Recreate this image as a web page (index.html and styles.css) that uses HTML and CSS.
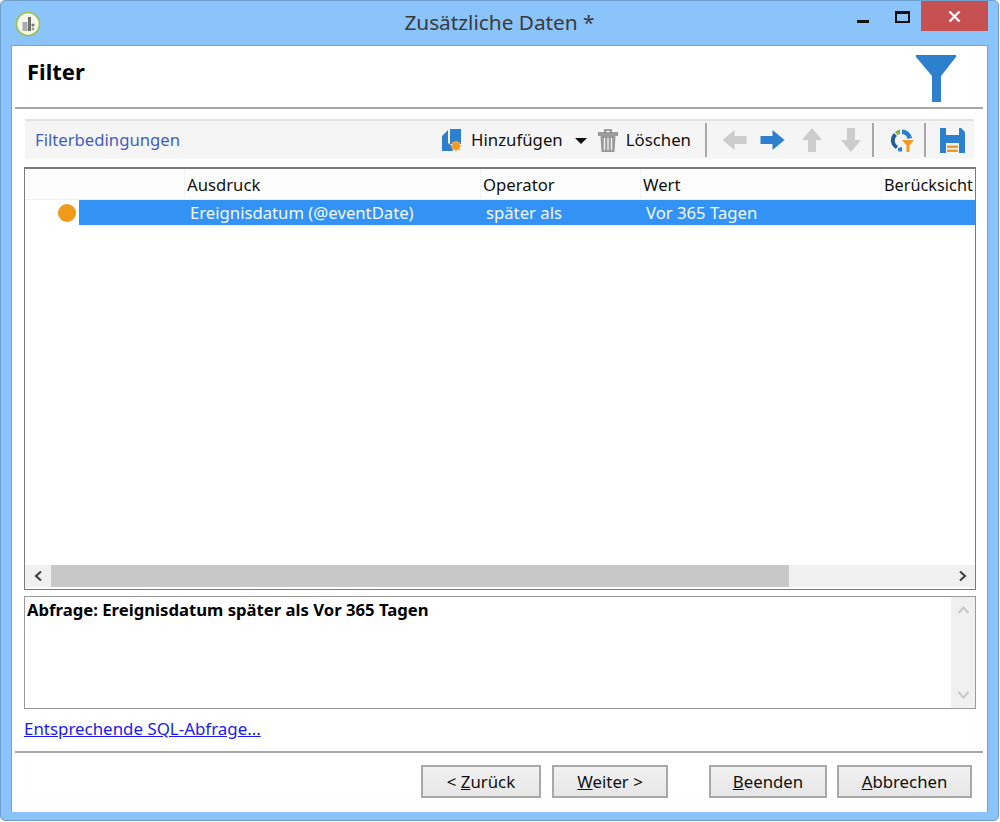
FILE: index.html
```html
<!DOCTYPE html>
<html lang="de">
<head>
    <meta charset="UTF-8">
    <title>Zusätzliche Daten</title>
    <link rel="stylesheet" href="styles.css">
</head>
<body>
    <div class="window">
        <div class="titlebar">
            <div class="title-left">
                <svg class="app-icon" width="26" height="26" viewBox="0 0 26 26">
                    <circle cx="13" cy="13" r="11.5" fill="#f4f6ee" stroke="#9cc04c" stroke-width="1.6"/>
                    <rect x="7.5" y="11" width="5" height="9" fill="#a9aca8"/>
                    <rect x="13" y="6" width="3" height="14" fill="#6d716d"/>
                    <circle cx="18" cy="14" r="1.6" fill="#777"/>
                    <circle cx="18" cy="18" r="1.4" fill="#999"/>
                </svg>
            </div>
            <div class="title-text">Zusätzliche Daten *</div>
            <div class="window-buttons">
                <div class="win-btn btn-min"><span class="min-glyph"></span></div>
                <div class="win-btn"><span class="max-glyph"></span></div>
                <div class="close-btn">
                    <svg width="13" height="13" viewBox="0 0 13 13"><path d="M1.5 1.5L11.5 11.5M11.5 1.5L1.5 11.5" stroke="#fff" stroke-width="2.4"/></svg>
                </div>
            </div>
        </div>

        <div class="content">
            <div class="header">
                <h1 class="heading">Filter</h1>
                <svg class="funnel" width="42" height="47" viewBox="0 0 42 47">
                    <path d="M1.5 0H40.500Q42 0 41 2L26 21V47H17V21L1 2Q0 0 1.500 0Z" fill="#2c80cd"/>
                </svg>
            </div>
            <div class="rule"></div>

            <div class="toolbar">
                <div class="toolbar-title">Filterbedingungen</div>
                <div class="tools">
                    <svg class="tool-icon" width="21" height="24" viewBox="0 0 21 24">
                        <path d="M1 8L7 2V15L12 18V23H1Z" fill="#2c80cd"/>
                        <path d="M9 1H20V16H9Z" fill="#2c80cd"/>
                        <circle cx="15" cy="18" r="4.200" fill="#f29a1f" stroke="#f5f5f5" stroke-width="0.600"/>
                        <path d="M15 12.500V23.500M9.500 18H20.500M11 14L19 22M19 14L11 22" stroke="#f29a1f" stroke-width="1.200"/>
                    </svg>
                    <span class="tool-label add-label">Hinzufügen</span>
                    <span class="caret"></span>
                    <svg class="tool-icon" width="20" height="25" viewBox="0 0 20 25">
                        <path d="M0 5H20V7H0ZM7 5V2H13V5" fill="none" stroke="#808080" stroke-width="1.600"/>
                        <path d="M2.500 8H17.500L16.500 24H3.500Z" fill="#9a9a9a"/>
                        <path d="M6.500 10V22M10 10V22M13.500 10V22" stroke="#f2f2f2" stroke-width="1.400"/>
                    </svg>
                    <span class="tool-label">Löschen</span>
                    <span class="tool-sep first-sep"></span>
                    <svg class="arrow arrow-back" width="25" height="24" viewBox="0 0 24 24"><path d="M12 2V8H24V16H12V22L0 12Z" fill="#cccccc"/></svg>
                    <svg class="arrow arrow-next" width="25" height="24" viewBox="0 0 24 24"><path d="M12 2V8H0V16H12V22L24 12Z" fill="#2c80cd"/></svg>
                    <svg class="arrow arrow-up" width="22" height="24" viewBox="0 0 22 24"><path d="M1 12L11 0L21 12H15V24H7V12Z" fill="#cccccc"/></svg>
                    <svg class="arrow arrow-down" width="22" height="24" viewBox="0 0 22 24"><path d="M1 12L11 24L21 12H15V0H7V12Z" fill="#cccccc"/></svg>
                    <span class="tool-sep second-sep"></span>
                    <svg class="tool-icon" width="25" height="25" viewBox="0 0 25 25">
                        <path d="M7 21A10 10 0 0 1 5 5L8 8A6 6 0 0 0 9 18Z" fill="#1d5f9e"/>
                        <path d="M6 4A10 10 0 0 1 11 1.500V6A6 6 0 0 0 8.500 7Z" fill="#7cb342"/>
                        <path d="M13 1.500A10 10 0 0 1 23 10L18.500 11A6 6 0 0 0 13 6Z" fill="#2c80cd"/>
                        <path d="M9 20L13 19V23.500A10 10 0 0 1 9 23Z" fill="#2c80cd"/>
                        <path d="M13 12H25L20.500 17.500V24H17.500V17.500Z" fill="#f29a1f"/>
                    </svg>
                    <span class="tool-sep third-sep"></span>
                    <svg class="tool-icon" width="25" height="25" viewBox="0 0 25 25">
                        <path d="M0 0H6V7H19V0H21L25 4V25H0Z" fill="#2c80cd"/>
                        <rect x="6" y="15" width="13" height="10" fill="#f5f5f5"/>
                        <rect x="7" y="17.500" width="11" height="2.500" fill="#f29a1f"/>
                        <rect x="7" y="21.500" width="11" height="2.500" fill="#f29a1f"/>
                    </svg>
                </div>
            </div>

            <div class="grid">
                <div class="grid-head">
                    <div class="col col-state"></div>
                    <div class="col col-expr">Ausdruck</div>
                    <div class="col col-op">Operator</div>
                    <div class="col col-val">Wert</div>
                    <div class="col col-extra">Berücksicht</div>
                </div>
                <div class="grid-row">
                    <div class="row-state"><span class="dot"></span></div>
                    <div class="row-cells">
                        <div class="cell cell-expr">Ereignisdatum (@eventDate)</div>
                        <div class="cell cell-op">später als</div>
                        <div class="cell cell-val">Vor 365 Tagen</div>
                    </div>
                </div>
                <div class="grid-empty"></div>
                <div class="hscroll">
                    <div class="scroll-btn">
                        <svg width="11" height="12" viewBox="0 0 11 12"><path d="M8 1.500L3 6L8 10.500" fill="none" stroke="#444" stroke-width="2.200"/></svg>
                    </div>
                    <div class="hthumb"></div>
                    <div class="htrack"></div>
                    <div class="scroll-btn">
                        <svg width="11" height="12" viewBox="0 0 11 12"><path d="M3 1.500L8 6L3 10.500" fill="none" stroke="#444" stroke-width="2.200"/></svg>
                    </div>
                </div>
            </div>

            <div class="query">
                <div class="query-text">Abfrage: Ereignisdatum später als Vor 365 Tagen</div>
                <div class="vscroll">
                    <svg width="13" height="10" viewBox="0 0 13 10"><path d="M1.500 8L6.500 2.500L11.500 8" fill="none" stroke="#c8c8c8" stroke-width="2"/></svg>
                    <svg width="13" height="10" viewBox="0 0 13 10"><path d="M1.500 2L6.500 7.500L11.500 2" fill="none" stroke="#c8c8c8" stroke-width="2"/></svg>
                </div>
            </div>

            <a class="sql-link" href="#">Entsprechende SQL-Abfrage...</a>
            <div class="rule bottom-rule"></div>

            <div class="footer">
                <button class="btn btn-back">&lt; <u>Z</u>urück</button>
                <button class="btn btn-next"><u>W</u>eiter &gt;</button>
                <button class="btn btn-finish"><u>B</u>eenden</button>
                <button class="btn btn-cancel"><u>A</u>bbrechen</button>
            </div>
        </div>
    </div>
</body>
</html>
```

FILE: styles.css
```css
html, body {
    margin: 0;
    padding: 0;
    background-color: #fff;
}

body {
    font-family: "Noto Sans", "Open Sans", sans-serif;
    font-size: 16.7px;
    color: #111;
}

.window {
    box-sizing: border-box;
    width: 999px;
    height: 821px;
    background-color: #8ac4fa;
    border: 1px solid #6e9fce;
    border-radius: 5px;
    padding: 0 10px 8px 10px;
    display: flex;
    flex-direction: column;
}

.titlebar {
    height: 44px;
    flex-shrink: 0;
    display: grid;
    grid-template-columns: 1fr auto 1fr;
}

.title-left {
    padding: 10px 0 0 4px;
}

.app-icon {
    display: block;
}

.title-text {
    font-size: 20.8px;
    color: #3a3a3a;
    padding-top: 7px;
}

.window-buttons {
    display: flex;
    justify-content: flex-end;
    align-items: flex-start;
}

.win-btn {
    width: 32px;
    height: 30px;
    display: flex;
    justify-content: center;
}

.btn-min {
    margin-right: 7px;
}

.min-glyph {
    width: 12px;
    height: 3px;
    background-color: #111;
    margin-top: 19px;
}

.max-glyph {
    box-sizing: border-box;
    width: 15px;
    height: 12px;
    border: 2px solid #111;
    border-top-width: 3px;
    margin-top: 10px;
}

.close-btn {
    width: 67px;
    height: 30px;
    background-color: #c75050;
    display: flex;
    align-items: center;
    justify-content: center;
    margin-left: 3px;
}

.content {
    flex: 1;
    min-height: 0;
    background-color: #fff;
    border: 1px solid #6fa5d8;
    border-bottom: none;
    padding: 0 4px 0 3px;
    display: flex;
    flex-direction: column;
}

.header {
    height: 61px;
    display: flex;
    justify-content: space-between;
    align-items: flex-start;
    padding-right: 26px;
    box-sizing: border-box;
}

.heading {
    margin: 10px 0 0 12px;
    font-size: 22px;
    line-height: 30px;
    font-weight: 700;
    color: #000;
}

.funnel {
    margin-top: 9px;
}

.rule {
    height: 2px;
    background-color: #a6a6a6;
    flex-shrink: 0;
}

.toolbar {
    box-sizing: border-box;
    height: 40px;
    margin: 10px 9px 8px 10px;
    background-color: #f5f5f5;
    border-top: 2px solid #e2e2e2;
    display: flex;
    align-items: center;
    justify-content: space-between;
    padding: 0 9px 0 10px;
    flex-shrink: 0;
}

.toolbar-title {
    color: #3f5fc0;
    padding-bottom: 2px;
}

.tools {
    display: flex;
    align-items: center;
}

.tool-label {
    font-size: 16.8px;
    margin-left: 8px;
    padding-bottom: 2px;
}

.add-label {
    margin-left: 9px;
}

.caret {
    width: 0;
    height: 0;
    border-left: 6px solid transparent;
    border-right: 6px solid transparent;
    border-top: 6px solid #111;
    margin: 2px 11px 0 12px;
}

.tool-sep {
    width: 2px;
    height: 34px;
    background-color: #a8a8a8;
}

.first-sep {
    margin: 0 15px 0 14px;
}

.second-sep {
    margin: 0 15px 0 10px;
}

.third-sep {
    margin: 0 14px 0 10px;
}

.arrow {
    flex-shrink: 0;
}

.arrow-back {
    margin-right: 13px;
}

.arrow-next {
    margin-right: 16px;
}

.arrow-up {
    margin-right: 17px;
}

.grid {
    height: 423px;
    box-sizing: border-box;
    margin: 0 7px 0 9px;
    border: 1px solid #7a7a7a;
    border-top-width: 2px;
    display: flex;
    flex-direction: column;
    flex-shrink: 0;
    overflow: hidden;
}

.grid-head {
    display: flex;
    height: 31px;
    background-color: #fdfdfd;
    border-bottom: 1px solid #f0f0f0;
    box-sizing: border-box;
    flex-shrink: 0;
    overflow: hidden;
    white-space: nowrap;
    line-height: 32px;
}

.col {
    box-sizing: border-box;
    padding-left: 2px;
    border-left: 1px solid #eef3f8;
    flex-shrink: 0;
}

.col-state {
    width: 159px;
    border-left: none;
}

.col-expr {
    width: 296px;
}

.col-op {
    width: 160px;
}

.col-val {
    width: 241px;
}

.col-extra {
    width: 92px;
    font-size: 16.3px;
}

.grid-row {
    display: flex;
    height: 25px;
    flex-shrink: 0;
}

.row-state {
    width: 54px;
    box-sizing: border-box;
    display: flex;
    align-items: center;
    justify-content: flex-end;
    padding-right: 3px;
    flex-shrink: 0;
}

.dot {
    width: 18px;
    height: 18px;
    border-radius: 50%;
    background-color: #f09a1c;
}

.row-cells {
    flex: 1;
    display: flex;
    background-color: #3393f5;
    color: #f2f8ff;
    line-height: 26px;
    white-space: nowrap;
}

.cell {
    box-sizing: border-box;
    flex-shrink: 0;
}

.cell-expr {
    width: 407px;
    padding-left: 111px;
}

.cell-op {
    width: 160px;
}

.cell-val {
    width: 200px;
}

.grid-empty {
    flex: 1;
}

.hscroll {
    height: 22px;
    margin-bottom: 2px;
    display: flex;
    background-color: #f0f0f0;
    flex-shrink: 0;
}

.scroll-btn {
    width: 26px;
    display: flex;
    align-items: center;
    justify-content: center;
    flex-shrink: 0;
}

.hthumb {
    width: 738px;
    background-color: #c8c8c8;
}

.htrack {
    flex: 1;
}

.query {
    box-sizing: border-box;
    height: 113px;
    margin: 6px 7px 0 9px;
    border: 1px solid #9a9a9a;
    display: flex;
    justify-content: space-between;
    flex-shrink: 0;
}

.query-text {
    font-weight: 700;
    color: #000;
    padding: 1px 0 0 2px;
}

.vscroll {
    width: 24px;
    background-color: #f0f0f0;
    display: flex;
    flex-direction: column;
    justify-content: space-between;
    align-items: center;
    padding: 8px 0;
    box-sizing: border-box;
}

.sql-link {
    color: #1a1aee;
    font-size: 16.9px;
    margin: 8px 0 0 9px;
    line-height: 24px;
    align-self: flex-start;
}

.bottom-rule {
    margin-top: 10px;
}

.footer {
    display: flex;
    padding: 12px 0 0 406px;
}

.btn {
    box-sizing: border-box;
    height: 33px;
    font-family: inherit;
    font-size: 16.8px;
    color: #111;
    background: linear-gradient(#f2f2f2, #e6e6e6);
    border: 2px solid #a8a8a8;
    padding: 0;
}

.btn-back {
    width: 120px;
    margin-right: 11px;
}

.btn-next {
    width: 116px;
    margin-right: 41px;
}

.btn-finish {
    width: 118px;
    margin-right: 10px;
}

.btn-cancel {
    width: 135px;
}
```
